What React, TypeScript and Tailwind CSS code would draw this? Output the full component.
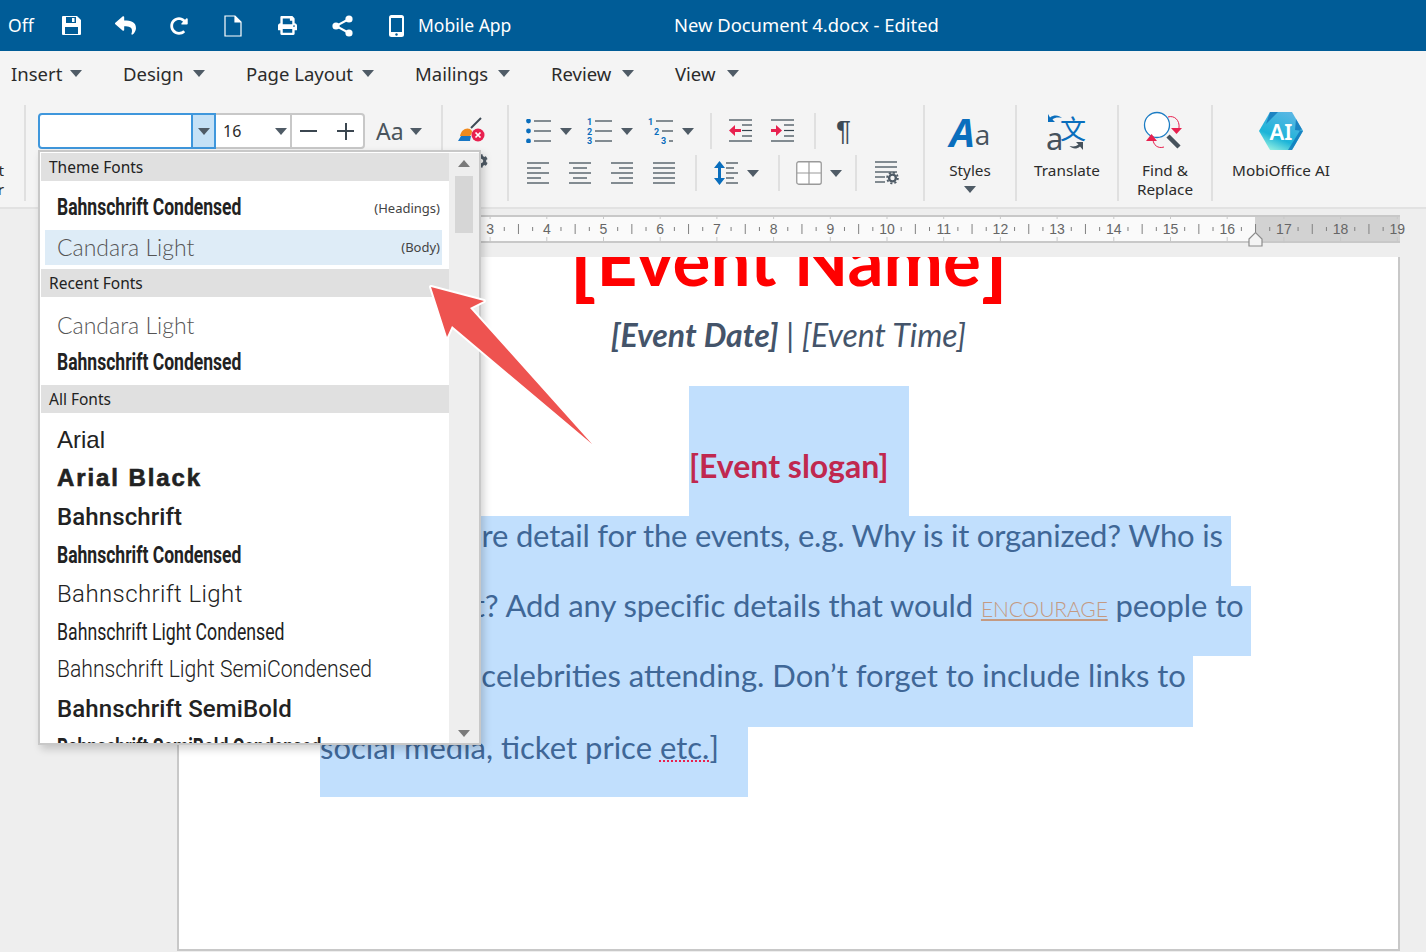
import { FaCog, FaPrint, FaRedoAlt, FaReply } from "react-icons/fa";

function Caret({ className = "" }: { className?: string }) {
  return (
    <svg width="12" height="7" viewBox="0 0 12 7" className={`shrink-0 ${className}`}>
      <path d="M0 0h12L6 7z" fill="#4f5b66" />
    </svg>
  );
}

function Sep({ className = "" }: { className?: string }) {
  return <div className={`w-[2px] shrink-0 bg-[#e0e0e0] ${className}`} />;
}

const INK = "#36454f";
const BLUE = "#0a6ebd";
const RED = "#e8214f";

function Lines({ rows }: { rows: [number, number, number][] }) {
  return (
    <>
      {rows.map(([x1, x2, y], i) => (
        <path key={i} d={`M${x1} ${y}H${x2}`} stroke={INK} strokeWidth="1.2" />
      ))}
    </>
  );
}

function BulletIcon() {
  return (
    <svg width="26" height="24" viewBox="0 0 26 24">
      {[2, 12, 22].map((y) => (
        <g key={y}>
          <circle cx="2.500" cy={y} r="2.400" fill={BLUE} />
          <path d={`M8 ${y}H25`} stroke={INK} strokeWidth="1.200" />
        </g>
      ))}
    </svg>
  );
}

function NumberIcon() {
  return (
    <svg width="26" height="26" viewBox="0 0 26 26" className="font-bold" fontFamily="Roboto, sans-serif" fontSize="9" fill={BLUE}>
      <text x="0" y="7">1</text>
      <text x="0" y="17">2</text>
      <text x="0" y="26">3</text>
      <Lines rows={[[8, 25, 3], [8, 25, 13], [8, 25, 23]]} />
    </svg>
  );
}

function MultiIcon() {
  return (
    <svg width="26" height="26" viewBox="0 0 26 26" className="font-bold" fontFamily="Roboto, sans-serif" fontSize="9" fill={BLUE}>
      <text x="0" y="7">1</text>
      <text x="6" y="17">2</text>
      <text x="13" y="26">3</text>
      <Lines rows={[[8, 25, 3], [14, 25, 13], [21, 25, 23]]} />
    </svg>
  );
}

function IndentIcon({ out }: { out?: boolean }) {
  return (
    <svg width="24" height="24" viewBox="0 0 24 24">
      <Lines rows={[[0, 23, 1], [13, 23, 6], [13, 23, 11.5], [13, 23, 17], [0, 23, 22]]} />
      {out ? (
        <path d="M0 11.500L6 6v4h6v3H6v4z" fill={RED} />
      ) : (
        <path d="M11 11.500L5 6v4H0v3h5v4z" fill={RED} />
      )}
    </svg>
  );
}

function AlignIcon({ rows }: { rows: [number, number][] }) {
  return (
    <svg width="22" height="22" viewBox="0 0 22 22">
      {rows.map(([a, b], i) => (
        <path key={i} d={`M${a} ${1 + i * 5}H${b}`} stroke={INK} strokeWidth="1.200" />
      ))}
    </svg>
  );
}

function SpacingIcon() {
  return (
    <svg width="24" height="24" viewBox="0 0 24 24">
      <path d="M5.500 0L11 7H7v10h4l-5.500 7L0 17h4V7H0z" fill={BLUE} />
      <Lines rows={[[12, 24, 2], [12, 20, 7], [12, 24, 12], [12, 20, 17], [12, 24, 22]]} />
    </svg>
  );
}

function TableIcon() {
  return (
    <svg width="26" height="24" viewBox="0 0 26 24">
      <rect x="0.750" y="0.750" width="24.500" height="22.500" rx="2" fill="#fff" stroke="#9a9a9a" strokeWidth="1.300" />
      <path d="M13 1V23M1 12H25" stroke="#9a9a9a" strokeWidth="1.200" />
    </svg>
  );
}

function SettingsIcon() {
  return (
    <svg width="24" height="24" viewBox="0 0 24 24">
      <Lines rows={[[0, 22, 1], [0, 22, 6], [0, 22, 11], [0, 10, 16], [0, 10, 21]]} />
      <circle cx="17.500" cy="17" r="3.400" fill="none" stroke="#4f5b66" strokeWidth="2.400" />
      <circle cx="17.500" cy="17" r="5.400" fill="none" stroke="#4f5b66" strokeWidth="1.800" strokeDasharray="2.100 2.100" />
    </svg>
  );
}

function EraserIcon() {
  return (
    <svg width="28" height="26" viewBox="0 0 28 26">
      <path d="M24 1L14 11" stroke="#3d4a55" strokeWidth="2" />
      <path d="M3 19c1-6 6-9 10-7l2 2c0 2-1 4-2 5z" fill="#f08a1d" />
      <path d="M1 24l3-5h10l-1 5z" fill="#1876c4" />
      <circle cx="21" cy="18" r="6.500" fill={RED} />
      <path d="M18.500 15.500l5 5M23.500 15.500l-5 5" stroke="#fff" strokeWidth="1.700" />
    </svg>
  );
}

function TranslateIcon() {
  return (
    <svg width="40" height="38" viewBox="0 0 40 38">
      <text x="13" y="26" fontFamily="'Noto Sans CJK SC', sans-serif" fontSize="26" fill={BLUE}>文</text>
      <text x="-1" y="37" fontFamily="'Noto Sans', sans-serif" fontSize="31" fill="#46525c">a</text>
      <path d="M1 1v8h7L5.500 6.500C8 4.500 11 4 15 5c-3-3-8-3.500-12-.5z" fill={BLUE} />
      <path d="M36 37v-8h-7l2.500 2.500c-2.500 2-5 2.500-9 1.500 3 3 7 3.500 10.500.5z" fill="#46525c" />
    </svg>
  );
}

function FindIcon() {
  return (
    <svg width="44" height="40" viewBox="0 0 44 40">
      <circle cx="14" cy="14" r="12.500" fill="#fff" stroke="#1b7cc4" strokeWidth="1.300" />
      <path d="M25 25l11 11" stroke="#46525c" strokeWidth="4.500" />
      <path d="M25 6c6-2 12 3 11 11M10 28c0 6 5 10 11 8" fill="none" stroke={RED} strokeWidth="1" />
      <path d="M28 17h11l-5.500 6z" fill={RED} />
      <path d="M3 30h11L8.500 23z" fill={RED} />
    </svg>
  );
}

function AiIcon() {
  return (
    <svg width="46" height="40" viewBox="0 0 46 40">
      <defs>
        <linearGradient id="aihex" x1="0.2" y1="1" x2="0.7" y2="0">
          <stop offset="0" stopColor="#9af3e2" />
          <stop offset="0.35" stopColor="#1cb4d8" />
          <stop offset="1" stopColor="#5ab6e4" />
        </linearGradient>
      </defs>
      <path d="M12 1h22l11 19-11 19H12L1 20z" fill="url(#aihex)" />
      <path d="M12 1h8L8 13zM34 39l11-19-2-2-13 21zM38 8l7 12-8-1z" fill="#0f73b8" opacity="0.750" />
      <text x="23" y="29" textAnchor="middle" fontFamily="'Noto Sans', sans-serif" fontWeight="600" fontSize="22" fill="#fff">AI</text>
    </svg>
  );
}

function SaveIcon() {
  return (
    <svg width="19" height="19" viewBox="0 0 19 19" className="shrink-0">
      <path fillRule="evenodd" d="M1 0h14l4 4v14a1 1 0 0 1-1 1H1a1 1 0 0 1-1-1V1a1 1 0 0 1 1-1zM4 1v6h10V1zM10 2h2.500v4H10zM3 11v7h13v-7z" fill="#fff" />
    </svg>
  );
}

function ShareIcon() {
  return (
    <svg width="21" height="22" viewBox="0 0 21 22" className="shrink-0">
      <path d="M17 4L4 11l13 7" fill="none" stroke="#fff" strokeWidth="2" />
      <circle cx="17" cy="4" r="3.600" fill="#fff" />
      <circle cx="4" cy="11" r="3.600" fill="#fff" />
      <circle cx="17" cy="18" r="3.600" fill="#fff" />
    </svg>
  );
}

function DocIcon() {
  return (
    <svg width="18" height="22" viewBox="0 0 18 22">
      <path d="M1 1h10l6 6v14H1zM11 1v6h6" fill="none" stroke="#fff" strokeWidth="1.200" />
      <path d="M11 1l6 6h-6z" fill="#fff" />
    </svg>
  );
}

function PhoneIcon() {
  return (
    <svg width="15" height="22" viewBox="0 0 15 22">
      <rect x="0" y="0" width="15" height="22" rx="2.500" fill="#fff" />
      <rect x="2" y="3" width="11" height="14" fill="#005c97" />
      <circle cx="7.500" cy="19.500" r="1.200" fill="#005c97" />
    </svg>
  );
}

function TopBar() {
  return (
    <div className="flex h-[51px] items-center bg-[#005c97] text-white">
      <span className="ml-[8px] w-[25px] whitespace-nowrap text-[17.500px]">Off</span>
      <div className="ml-[29px]"><SaveIcon /></div>
      <FaReply className="ml-[34px] shrink-0" size={21} />
      <FaRedoAlt className="ml-[34px] shrink-0" size={18} />
      <div className="ml-[36px] shrink-0"><DocIcon /></div>
      <FaPrint className="ml-[36px] shrink-0" size={19} />
      <div className="ml-[35px]"><ShareIcon /></div>
      <div className="ml-[36px] shrink-0"><PhoneIcon /></div>
      <span className="ml-[14px] w-[93px] whitespace-nowrap text-[17.500px]">Mobile App</span>
      <span className="ml-[163px] whitespace-nowrap pb-[2px] text-[18.400px]">New Document 4.docx - Edited</span>
    </div>
  );
}

const MENU = [
  { label: "Insert", w: "w-[59px]", gap: "mr-[41px]", left: "ml-[11px]" },
  { label: "Design", w: "w-[70px]", gap: "mr-[41px]", left: "" },
  { label: "Page Layout", w: "w-[116px]", gap: "mr-[41px]", left: "" },
  { label: "Mailings", w: "w-[83px]", gap: "mr-[41px]", left: "" },
  { label: "Review", w: "w-[71px]", gap: "mr-[41px]", left: "" },
  { label: "View", w: "w-[52px]", gap: "", left: "" },
];

function MenuBar() {
  return (
    <div className="flex h-[47px] items-center pb-[2px] text-[18.500px] text-[#2b2b2b]">
      {MENU.map((m) => (
        <div key={m.label} className={`flex items-center ${m.left} ${m.gap}`}>
          <span className={`${m.w} whitespace-nowrap`}>{m.label}</span>
          <Caret />
        </div>
      ))}
    </div>
  );
}

function FontControls() {
  return (
    <div className="ml-[12px] mt-[8px] flex h-[36px] w-[403px] items-center text-[#2b2b2b]">
      <div className="flex h-full w-[178px] shrink-0 overflow-hidden rounded-l-[4px] border-2 border-[#3f97dc] bg-white">
        <div className="flex-1" />
        <div className="flex w-[23px] items-center justify-center border-l-2 border-[#3f97dc] bg-[#c5e1f6]"><Caret /></div>
      </div>
      <div className="flex h-full w-[74px] shrink-0 items-center justify-between border-y-2 border-[#c8c8c8] bg-white pl-[7px] pr-[3px] text-[16px]">
        16<Caret />
      </div>
      <div className="flex h-full w-[75px] shrink-0 items-center justify-between rounded-r-[4px] border-2 border-[#c8c8c8] bg-white pl-[8px] pr-[9px]">
        <div className="h-[2px] w-[17px] bg-[#3b4650]" />
        <div className="relative h-[17px] w-[17px]">
          <div className="absolute left-0 top-[7.500px] h-[2px] w-[17px] bg-[#3b4650]" />
          <div className="absolute left-[7.500px] top-0 h-[17px] w-[2px] bg-[#3b4650]" />
        </div>
      </div>
      <span className="ml-[11px] text-[23px] text-[#4a545c]">Aa</span>
      <Caret className="ml-[6px]" />
    </div>
  );
}

function ListGroup() {
  return (
    <div className="mt-[8px] flex w-[414px] shrink-0 flex-col gap-[6px]">
      <div className="flex h-[36px] items-center pl-[17px]">
        <BulletIcon />
        <Caret className="ml-[8px]" />
        <div className="ml-[15px]"><NumberIcon /></div>
        <Caret className="ml-[8px]" />
        <div className="ml-[15px]"><MultiIcon /></div>
        <Caret className="ml-[8px]" />
        <Sep className="ml-[16px] h-full" />
        <div className="ml-[17px]"><IndentIcon out /></div>
        <div className="ml-[18px]"><IndentIcon /></div>
        <Sep className="ml-[19px] h-full" />
        <span className="ml-[20px] text-[28px] leading-none text-[#3d4a55] [font-family:'Liberation_Sans',sans-serif]">¶</span>
      </div>
      <div className="flex h-[36px] items-center pl-[18px]">
        <AlignIcon rows={[[0, 22], [0, 14], [0, 22], [0, 14], [0, 22]]} />
        <div className="ml-[20px]"><AlignIcon rows={[[0, 22], [4, 18], [0, 22], [4, 18], [0, 22]]} /></div>
        <div className="ml-[20px]"><AlignIcon rows={[[0, 22], [8, 22], [0, 22], [8, 22], [0, 22]]} /></div>
        <div className="ml-[20px]"><AlignIcon rows={[[0, 22], [0, 22], [0, 22], [0, 22], [0, 22]]} /></div>
        <Sep className="ml-[20px] h-full" />
        <div className="ml-[17px]"><SpacingIcon /></div>
        <Caret className="ml-[9px]" />
        <Sep className="ml-[19px] h-full" />
        <div className="ml-[16px]"><TableIcon /></div>
        <Caret className="ml-[8px]" />
        <Sep className="ml-[13px] h-full" />
        <div className="ml-[18px]"><SettingsIcon /></div>
      </div>
    </div>
  );
}

function Ribbon() {
  return (
    <div className="flex h-[111px] border-b-2 border-[#e2e2e2] pt-[7px] text-[15.300px] leading-[19px] text-[#2b2b2b]">
      <div className="relative w-[24px] shrink-0 overflow-hidden">
        <div className="absolute right-[20px] top-[56px] whitespace-nowrap text-right">Format<br />Painter</div>
      </div>
      <Sep className="h-[96px]" />
      <FontControls />
      <Sep className="h-[96px]" />
      <div className="flex w-[64px] shrink-0 flex-col">
        <div className="ml-[14px] mt-[12px]"><EraserIcon /></div>
        <FaCog className="ml-[31px] mt-[11px] text-[#4f5b66]" size={14} />
      </div>
      <Sep className="h-[96px]" />
      <ListGroup />
      <Sep className="h-[96px]" />
      <div className="flex w-[90px] shrink-0 flex-col items-center">
        <div className="mt-[5px] flex h-[44px] items-end [font-family:'Open_Sans',sans-serif]">
          <span className="text-[40px] font-bold italic leading-[44px] text-[#0a6ebd]">A</span>
          <span className="text-[28px] leading-[40px] text-[#46525c]">a</span>
        </div>
        <span className="mt-[7px]">Styles</span>
        <Caret className="mt-[6px]" />
      </div>
      <Sep className="h-[96px]" />
      <div className="flex w-[100px] shrink-0 flex-col items-center">
        <div className="mt-[8px]"><TranslateIcon /></div>
        <span className="mt-[10px]">Translate</span>
      </div>
      <Sep className="h-[96px]" />
      <div className="flex w-[92px] shrink-0 flex-col items-center">
        <div className="mt-[6px]"><FindIcon /></div>
        <span className="mt-[10px] text-center">Find &amp;<br />Replace</span>
      </div>
      <Sep className="h-[96px]" />
      <div className="flex w-[136px] shrink-0 flex-col items-center">
        <div className="mt-[6px]"><AiIcon /></div>
        <span className="mt-[10px] whitespace-nowrap">MobiOffice AI</span>
      </div>
    </div>
  );
}

function RulerMarks() {
  const unit = 56.7;
  const origin = 143;
  const marks = [];
  for (let n = -3; n <= 19; n++) {
    const x = origin + n * unit;
    if (n >= 1) {
      marks.push(<text key={`n${n}`} x={x} y="19" textAnchor="middle" fontSize="14" fill="#666" fontFamily="'Liberation Sans', sans-serif">{n}</text>);
      marks.push(<path key={`g${n}`} d={`M${x} 0v4M${x} 22v6`} stroke="#c8c8c8" strokeWidth="1" />);
    }
    if (n < 19) {
      marks.push(<path key={`h${n}`} d={`M${x + unit / 2} 9v10`} stroke="#808080" strokeWidth="1" />);
      marks.push(<path key={`a${n}`} d={`M${x + unit / 4} 12v4M${x + (unit * 3) / 4} 12v4`} stroke="#808080" strokeWidth="1" />);
    }
  }
  return (
    <svg width="1235" height="32" viewBox="0 0 1235 32" className="absolute left-0 top-0">
      {marks}
      <path d="M1072 24l6.500-6.500 6.500 6.500v7h-13z" fill="#f4f4f4" stroke="#8c8c8c" strokeWidth="1.200" />
    </svg>
  );
}

function Ruler() {
  return (
    <div className="relative ml-[177px] mt-[6px] flex h-[28px] w-[1223px] border-y-2 border-[#c8c8c8]">
      <div className="w-[1078px] bg-[#fafafa]" />
      <div className="flex-1 bg-[#d2d2d2]" />
      <div className="absolute left-0 top-[-2px]"><RulerMarks /></div>
    </div>
  );
}

function Page() {
  return (
    <div className="ml-[177px] mt-[14px] h-[694px] w-[1223px] overflow-hidden border-x-2 border-b-2 border-[#c8c8c8] bg-white [font-family:Lato,sans-serif]">
      <div className="mt-[-45px] h-[80px] whitespace-nowrap pl-[390px] text-[71px] font-bold leading-[80px] text-[#ff0000]">
        <span className="relative top-[4px] text-[88px] leading-[80px]">[</span>Event Name<span className="relative top-[4px] text-[88px] leading-[80px]">]</span>
      </div>
      <div className="mt-[23px] w-[1219px] whitespace-nowrap text-center text-[32px] italic leading-[40px] text-[#44546a]">
        <b>[Event Date]</b> | [Event Time]
      </div>
      <div className="ml-[510px] mt-[31px] flex h-[130px] w-[220px] items-end bg-[#c1dffd] pb-[30px] text-[32px] font-bold leading-[40px] text-[#c0284f]">
        [Event slogan]
      </div>
      <div className="ml-[141px] text-[31px] leading-[38px] text-[#3f6797]">
        <div className="h-[70px] w-[911px] whitespace-nowrap bg-[#c1dffd] tracking-[-0.200px]">[Provide more detail for the events, e.g. Why is it organized? Who is</div>
        <div className="h-[70px] w-[931px] whitespace-nowrap bg-[#c1dffd] tracking-[-0.100px]">organizing it? Add any specific details that would <span className="text-[21px] font-light text-[#c49a82] underline">ENCOURAGE</span> people to</div>
        <div className="h-[71px] w-[873px] whitespace-nowrap bg-[#c1dffd]"><span className="mr-[4px]">attend, e.g.</span> celebrities attending. Don’t forget to include links to</div>
        <div className="h-[70px] w-[428px] whitespace-nowrap bg-[#c1dffd] leading-[40px]">social media, ticket price <span className="underline decoration-[#e8214f] decoration-dotted decoration-2">etc.</span>]</div>
      </div>
    </div>
  );
}

const BAHN_C = "inline-block origin-left scale-x-[.73] text-[24px] font-bold text-[#222] [font-family:Roboto,sans-serif]";
const CANDARA = "text-[23px] font-light text-[#555] [font-family:Lato,sans-serif]";

function Header({ children }: { children: string }) {
  return <div className="flex h-[28px] items-center bg-[#e0e0e0] pl-[8px] pt-[2px] text-[15.500px] text-[#222]">{children}</div>;
}

function Row({ children, className = "" }: { children: React.ReactNode; className?: string }) {
  return <div className={`flex h-[38.400px] items-center whitespace-nowrap pl-[16px] text-[#222] ${className}`}>{children}</div>;
}

function FontDropdown() {
  return (
    <div className="absolute left-[38px] top-[150px] flex h-[595px] w-[443px] border-2 border-[#c8c8c8] bg-white pl-[1px] pt-[1px] shadow-[3px_4px_8px_rgba(0,0,0,0.18)]">
      <div className="h-full w-[408px] overflow-hidden">
        <Header>Theme Fonts</Header>
        <div className="mt-[7px] flex h-[38px] items-center justify-between pl-[16px] pr-[9px]">
          <span className={BAHN_C}>Bahnschrift Condensed</span>
          <span className="pt-[3px] text-[13px] text-[#444]">(Headings)</span>
        </div>
        <div className="ml-[4px] mt-[4px] flex h-[35px] w-[397px] items-center justify-between bg-[#deecf7] pl-[12px] pr-[2px]">
          <span className={CANDARA}>Candara Light</span>
          <span className="text-[13px] text-[#444]">(Body)</span>
        </div>
        <div className="mt-[4px]"><Header>Recent Fonts</Header></div>
        <div className="mt-[9px]">
          <Row><span className={CANDARA}>Candara Light</span></Row>
        </div>
        <div className="-mt-[2px]"><Row><span className={BAHN_C}>Bahnschrift Condensed</span></Row></div>
        <div className="mt-[4px]"><Header>All Fonts</Header></div>
        <div className="mt-[8px]">
          <Row className="text-[24px] [font-family:'Liberation_Sans',sans-serif]">Arial</Row>
          <Row className="text-[24px] font-black tracking-[1.900px] [font-family:'Liberation_Sans',sans-serif] [-webkit-text-stroke:0.600px_#222]">Arial Black</Row>
          <Row className="text-[24px] font-medium tracking-[0.100px] [font-family:Roboto,sans-serif]">Bahnschrift</Row>
          <Row><span className={BAHN_C}>Bahnschrift Condensed</span></Row>
          <Row className="text-[24px] font-light tracking-[0.400px] [font-family:Roboto,sans-serif]">Bahnschrift Light</Row>
          <Row><span className="inline-block origin-left scale-x-[.737] text-[24px] [font-family:Roboto,sans-serif]">Bahnschrift Light Condensed</span></Row>
          <Row><span className="inline-block origin-left scale-x-[.92] text-[23px] font-light [font-family:Roboto,sans-serif]">Bahnschrift Light SemiCondensed</span></Row>
          <Row className="text-[24px] font-medium tracking-[0.100px] [font-family:Roboto,sans-serif]">Bahnschrift SemiBold</Row>
          <Row><span className={BAHN_C}>Bahnschrift SemiBold Condensed</span></Row>
        </div>
      </div>
      <div className="flex w-[30px] flex-col items-center bg-[#eeeeee] pt-[7px]">
        <svg width="12" height="7" viewBox="0 0 12 7"><path d="M0 7h12L6 0z" fill="#7a7a7a" /></svg>
        <div className="mt-[9px] h-[57px] w-[18px] bg-[#d6d6d6]" />
        <svg className="mt-auto mb-[6px]" width="12" height="7" viewBox="0 0 12 7"><path d="M0 0h12L6 7z" fill="#7a7a7a" /></svg>
      </div>
    </div>
  );
}

function Arrow() {
  return (
    <svg width="180" height="180" viewBox="0 0 180 180" className="absolute left-[425px] top-[280px]">
      <path
        d="M6 7L59 21L45 28L167 164L27 46L22 57Z"
        fill="#ee5350"
        stroke="#fff"
        strokeWidth="4"
        strokeLinejoin="round"
        paintOrder="stroke"
      />
    </svg>
  );
}

export default function App() {
  return (
    <div className="relative h-[952px] w-[1426px] overflow-hidden bg-[#eeeeee] [font-family:'Noto_Sans',sans-serif]">
      <TopBar />
      <div className="bg-[#f4f4f4]">
        <MenuBar />
        <Ribbon />
      </div>
      <Ruler />
      <Page />
      <FontDropdown />
      <Arrow />
    </div>
  );
}
